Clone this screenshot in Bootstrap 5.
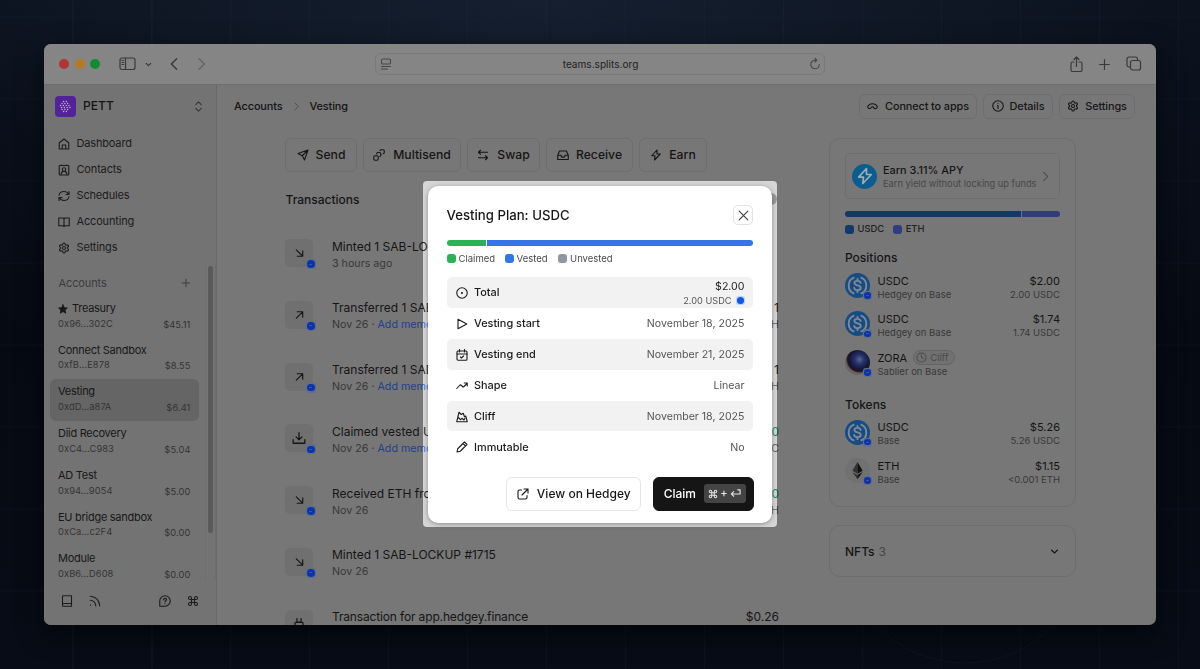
<!DOCTYPE html>
<html lang="en">
<head>
<meta charset="utf-8">
<meta name="viewport" content="width=device-width, initial-scale=1">
<title>Vesting – Splits Teams</title>
<link href="https://cdn.jsdelivr.net/npm/bootstrap@5.3.0/dist/css/bootstrap.min.css" rel="stylesheet">
<style>
:root{--ink:#151515;--soft:#383838;--line:#6e6e6e}
body{font-family:Inter,"Liberation Sans",sans-serif;font-size:12px;line-height:1.25;color:var(--ink);width:1200px;height:669px;overflow:hidden;position:relative;
 background:
 repeating-linear-gradient(90deg,transparent 0 72px,rgba(40,75,110,.1) 72px 73.5px,transparent 73.5px 79px),
 radial-gradient(ellipse 620px 240px at 45% 0,#151f2f,transparent),
 linear-gradient(#0c131f,#060a13 50%,#070c16)}
.gridlines{position:absolute;inset:0}
svg{display:block;flex:none;fill:none;stroke:currentColor;stroke-width:2.2;stroke-linecap:round;stroke-linejoin:round}
.w12{width:12px;height:12px}.w14{width:14px;height:14px}
.win{position:relative;margin:44px;width:1112px;height:581px;border-radius:7px;background:#777;overflow:hidden;box-shadow:0 8px 26px rgba(0,0,0,.55)}
.bar-top{height:41px;background:#858585;border-bottom:1px solid #6d6d6d;color:#393939;padding:0 14px 0 15px}
.light{width:10px;height:10px;border-radius:50%;margin-right:5.5px}
.addr{width:450px;height:22px;border:1px solid #797979;border-radius:6px;margin-left:166px;font-size:10.1px;color:#222;padding:0 3px 0 4px}
.side{width:173px;background:#737373;border-right:1px solid #696969;height:540px;font-size:11px}
.brand-sq{width:21px;height:21px;border-radius:4px;background:#522398;color:#c8a9dc}
.nav-row{height:26.2px;gap:6.5px;padding-left:14px;color:#1c1c1c;letter-spacing:-.015em}
.acct{height:41.75px;margin-left:6px;width:148.5px;border-radius:6px;padding:6.5px 8px 0 8px;color:#181818;font-size:11px;letter-spacing:-.025em}
.acct .sub{font-size:9.3px;color:#343434;letter-spacing:.01em;line-height:16px}
.acct .sub span{font-size:9.3px;line-height:17px}
.acct.on{background:#656565}
.track{width:11px;height:314px;border-left:1px solid #6d6d6d;border-right:1px solid #6d6d6d;padding:1px 2px}
.thumb{height:267px;border-radius:4px;background:#5a5a5a}
.crumb{font-size:10.9px;font-weight:500;letter-spacing:-.01em;padding-top:1px}
.hbtn{height:25px;border:1px solid var(--line);border-radius:6px;font-size:10.9px;letter-spacing:-.01em;font-weight:500;color:#161616}
.hbtn span{padding-top:1px}
.abtn{height:34px;border:1px solid var(--line);border-radius:6px;font-size:12.2px;font-weight:500}
.feed{width:494px;margin-left:68px}
.tx{height:61.8px}
.ico{position:relative;width:28px;height:28px;border-radius:5px;background:#707070;margin-top:8px;margin-right:19px}
.base{position:absolute;width:10px;height:10px;border-radius:3px;background:#606d8c;right:-3px;bottom:-2px}
.base::before{content:"";position:absolute;inset:1.2px;border-radius:50%;background:#0a34ac}
.base::after{content:"";position:absolute;left:2.5px;top:4.5px;width:3.5px;height:1px;background:#3f5591}
.tx .tt{font-size:12px;line-height:17px;margin-top:6.5px}
.tx .sub{font-size:10.7px;line-height:17px;color:var(--soft)}
.lnk{color:#1f4288}.grn{color:#0f5139}
.panel{width:247px;border:1px solid var(--line);border-radius:11px;padding:14px 15px}
.earn{height:46px;border:1px solid var(--line);border-radius:5px;padding:0 8px 0 6px}
.coin{position:relative;width:25px;height:25px;margin-bottom:2px}
.coin .base{right:-2px;bottom:-2px;width:9px;height:9px}
.coin .base::after{top:4px;width:3px}
.sq{width:9px;height:9px;border-radius:3px}
.hold{height:38.6px;font-size:11px}
.hold .words{padding-top:1.5px}
.hold .sub{font-size:9.5px;color:var(--soft);line-height:13px}
.hold .tt{line-height:14px}
.ph{font-size:12px;font-weight:500;height:18px;line-height:19px}
.pill{border:1px solid #646464;border-radius:8px;height:15px;font-size:9.6px;color:#4a4a4a;padding:0 5px 0 2px;gap:3px;background:#717171}
.spot{position:absolute;left:423px;top:181px;width:354px;height:346px;border-radius:4px;padding:5px;backdrop-filter:brightness(1.8)}
.dlg{width:344px;height:337px;border-radius:10px;background:#fff;box-shadow:0 1px 5px rgba(0,0,0,.35);padding:19px 19px 12px 18.5px;color:#171717}
.dlg h1{font-size:13.2px;font-weight:500;padding-top:1px}
.xbtn{width:20px;height:20px;border:1px solid #e2e2e2;border-radius:5px;color:#444}
.seg{height:6px}
.dlg .lg{font-size:9.5px;color:#4b4b4b;height:12px}
.drow{height:30.9px;border-radius:5px;padding:1px 8.5px 0 9px;font-size:10.6px;color:#555}
.drow:nth-child(odd){background:#f2f2f2}
.drow svg{color:#1b1b1b}
.drow b{font-weight:500;color:#1b1b1b;margin-left:6.5px;font-size:10.9px}
.dbtn{height:34px;border:1px solid #e6e6e6;border-radius:6px;font-size:12px;font-weight:500}
.dark{background:#151515;border-color:#151515;color:#fff}
.kbd-tag{background:#444;border-radius:3px;width:42px;height:19px;gap:2px;color:#e4e4e4;font-size:11px}
</style>
</head>
<body>
<svg class="gridlines" width="1200" height="669" style="stroke:#12202f;stroke-width:1">
 <path d="M0 17H1200M0 99H1200M0 181H1200M0 263H1200M0 345H1200M0 427H1200M0 509H1200M0 591H1200" opacity=".45"/><circle cx="965" cy="539" r="124" opacity=".4"/>
</svg>
<svg width="0" height="0" class="position-absolute">
<symbol id="gear" viewBox="0 0 24 24"><path d="M12.220 2h-.440a2 2 0 0 0-2 2v.180a2 2 0 0 1-1 1.730l-.430.250a2 2 0 0 1-2 0l-.150-.080a2 2 0 0 0-2.730.730l-.220.380a2 2 0 0 0 .730 2.730l.150.100a2 2 0 0 1 1 1.720v.510a2 2 0 0 1-1 1.740l-.150.090a2 2 0 0 0-.730 2.730l.220.380a2 2 0 0 0 2.730.730l.150-.080a2 2 0 0 1 2 0l.430.250a2 2 0 0 1 1 1.730V20a2 2 0 0 0 2 2h.440a2 2 0 0 0 2-2v-.180a2 2 0 0 1 1-1.730l.430-.250a2 2 0 0 1 2 0l.150.080a2 2 0 0 0 2.730-.730l.220-.390a2 2 0 0 0-.730-2.730l-.150-.080a2 2 0 0 1-1-1.740v-.500a2 2 0 0 1 1-1.740l.150-.090a2 2 0 0 0 .730-2.730l-.220-.380a2 2 0 0 0-2.730-.730l-.150.080a2 2 0 0 1-2 0l-.430-.250a2 2 0 0 1-1-1.730V4a2 2 0 0 0-2-2z"/><circle cx="12" cy="12" r="3"/></symbol>
<symbol id="dr" viewBox="0 0 24 24"><path d="M5 5l14 14M19 7v12H7"/></symbol>
<symbol id="ur" viewBox="0 0 24 24"><path d="M5 19L19 5M7 5h12v12"/></symbol>
<symbol id="dl" viewBox="0 0 24 24"><path d="M12 3v12M7 10l5 5 5-5M2 15v6h20v-6"/></symbol>
<symbol id="bolt" viewBox="0 0 24 24"><path d="M14 2L3.500 13.500h6.500L9 22l11.500-12H14z"/></symbol>
<symbol id="cmd" viewBox="0 0 24 24"><path d="M9 9h6v6H9zM9 9V6a3 3 0 1 0-3 3zM15 9h3a3 3 0 1 0-3-3zM15 15v3a3 3 0 1 0 3-3zM9 15H6a3 3 0 1 0 3 3z"/></symbol>
<symbol id="cr" viewBox="0 0 24 24"><path d="M8 3l9 9-9 9"/></symbol>
<symbol id="cd" viewBox="0 0 24 24"><path d="M4 8l8 8 8-8"/></symbol>
<symbol id="plus" viewBox="0 0 24 24"><path d="M12 3v18M3 12h18"/></symbol>
<symbol id="usdc" viewBox="0 0 32 32"><circle cx="16" cy="16" r="16" fill="#174b83" stroke="none"/><path d="M12 5.500a11.200 11.200 0 0 0 0 21M20 5.500a11.200 11.200 0 0 1 0 21" stroke="#7f8a96" stroke-width="2.400" stroke-linecap="butt"/><path d="M20 12.700c-.5-2-2-2.700-4-2.700-2.300 0-4 1-4 2.900 0 4.300 8.200 1.700 8.200 6.100 0 2-1.900 3-4.200 3-2.200 0-3.900-1-4.300-3M16 7.500V10M16 22v2.500" stroke="#7f8a96" stroke-width="2.400"/></symbol>
</svg>

<div class="win">
 <header class="bar-top d-flex align-items-center">
  <i class="light" style="background:#b23432"></i><i class="light" style="background:#b67b22"></i><i class="light" style="background:#138b33"></i>
  <svg style="margin-left:13px;stroke-width:1.200" width="17" height="14" viewBox="0 0 17 14"><rect x="1" y="1" width="15" height="11.500" rx="2"/><path d="M6.500 1v11.500M3 3.500h1.500M3 5.500h1.500M3 7.500h1.500" /></svg>
  <svg style="margin-left:9.500px;stroke-width:4" width="7" height="7"><use href="#cd"/></svg>
  <svg style="margin-left:14px" width="16" height="16" viewBox="0 0 24 24"><path d="M16 4l-8 8 8 8"/></svg>
  <svg style="margin-left:11px;color:#646464" width="16" height="16" viewBox="0 0 24 24"><path d="M9 4l8 8-8 8"/></svg>
  <div class="addr d-flex align-items-center justify-content-between">
   <svg width="12" height="12" viewBox="0 0 12 12" style="stroke-width:1.100;color:#484848"><rect x="1.500" y="1" width="9" height="5" rx="1.200"/><path d="M1.500 8.500h9M1.500 11h6"/></svg>
   <span>teams.splits.org</span>
   <svg width="12" height="12" viewBox="0 0 24 24" style="color:#484848"><path d="M20.500 13A8.500 8.500 0 1 1 12 4.500h3M12 1l3.500 3.500L12 8"/></svg>
  </div>
  <svg class="ms-auto" width="15" height="17" viewBox="0 0 15 17" style="stroke-width:1.200"><path d="M5 6H3.500A1.500 1.500 0 0 0 2 7.500V14a1.500 1.500 0 0 0 1.500 1.500h8A1.500 1.500 0 0 0 13 14V7.500A1.500 1.500 0 0 0 11.500 6H10M7.500 10.500V1M5 3.500L7.500 1 10 3.500"/></svg>
  <svg style="margin-left:14px" width="13" height="13"><use href="#plus"/></svg>
  <svg style="margin-left:15px;stroke-width:1.200" width="16" height="16" viewBox="0 0 16 16"><rect x="4.500" y="4.500" width="10" height="9.500" rx="2"/><path d="M4.500 11H3a2 2 0 0 1-2-2V3a2 2 0 0 1 2-2h6.500a2 2 0 0 1 2 2v1.500"/></svg>
 </header>

 <div class="d-flex">
  <aside class="side d-flex flex-column">
   <div class="d-flex align-items-center" style="height:42px;padding:0 12px 0 11px">
    <div class="brand-sq d-flex align-items-center justify-content-center"><svg width="15" height="15" viewBox="0 0 15 15" style="stroke-width:1.400;stroke-dasharray:.1 2.700"><path d="M5.500 2.500h5M4 4.500h8M2.500 6.500h11M3.500 8.500h9M4 10.500h8M5.500 12.500h5"/></svg></div>
    <span style="font-size:12.100px;margin-left:7px;font-weight:500">PETT</span>
    <svg class="ms-auto" width="11" height="11" viewBox="0 0 24 24" style="color:#333"><path d="M6 8l6-6 6 6M6 16l6 6 6-6"/></svg>
   </div>
   <nav style="padding-top:3.500px">
    <div class="nav-row d-flex align-items-center"><svg class="w12" viewBox="0 0 24 24"><path d="M2.500 9.500L12 2l9.500 7.500V22h-19zM8.500 22v-8h7v8"/></svg>Dashboard</div>
    <div class="nav-row d-flex align-items-center"><svg class="w12" viewBox="0 0 24 24"><rect x="2.500" y="3" width="19" height="19" rx="1"/><circle cx="12" cy="11" r="3.500"/><path d="M6.500 21v-3l3-3h5l3 3v3M7 3V1.500M17 3V1.500"/></svg>Contacts</div>
    <div class="nav-row d-flex align-items-center"><svg class="w12" viewBox="0 0 24 24"><path d="M2 10.500C3 6 7 3 12 3c4 0 7.500 2.500 9 5.500M22 3v6h-6M22 13.500C21 18 17 21 12 21c-4 0-7.500-2.500-9-5.500M2 21v-6h6"/></svg>Schedules</div>
    <div class="nav-row d-flex align-items-center"><svg class="w12" viewBox="0 0 24 24"><path d="M12 5.500L10 4H1.500v15.500H10l2 1.500 2-1.500h8.500V4H14zM12 5.500V21"/></svg>Accounting</div>
    <div class="nav-row d-flex align-items-center"><svg class="w12"><use href="#gear"/></svg>Settings</div>
   </nav>
   <div class="d-flex" style="height:318px">
    <div class="overflow-hidden" style="width:161px;height:318px">
     <div class="d-flex align-items-center justify-content-between" style="height:34px;padding:10px 14px 0 14.500px;color:#3c3c3c;letter-spacing:-.01em">Accounts<svg width="10" height="10" style="stroke-width:2.400"><use href="#plus"/></svg></div>
     <div>
     <div class="acct"><div class="d-flex align-items-center"><svg width="10" height="10" viewBox="0 0 24 24" style="fill:currentColor;margin-right:4px"><path d="M12 2l3 7 7.500.6-5.700 5 1.700 7.400L12 18l-6.500 4 1.700-7.400-5.700-5L9 9z"/></svg>Treasury</div><div class="sub d-flex justify-content-between">0x96…302C<span>$45.11</span></div></div>
     <div class="acct">Connect Sandbox<div class="sub d-flex justify-content-between">0xfB…E878<span>$8.55</span></div></div>
     <div class="acct on">Vesting<div class="sub d-flex justify-content-between">0xdD…a87A<span>$6.41</span></div></div>
     <div class="acct">Diid Recovery<div class="sub d-flex justify-content-between">0xC4…C983<span>$5.04</span></div></div>
     <div class="acct">AD Test<div class="sub d-flex justify-content-between">0x94…9054<span>$5.00</span></div></div>
     <div class="acct">EU bridge sandbox<div class="sub d-flex justify-content-between">0xCa…c2F4<span>$0.00</span></div></div>
     <div class="acct">Module<div class="sub d-flex justify-content-between">0xB6…D608<span>$0.00</span></div></div>
     </div>
    </div>
    <div class="track" style="margin-top:4px"><div class="thumb"></div></div>
   </div>
   <div class="d-flex align-items-center" style="height:44px;padding:0 17px;color:#1c1c1c">
    <svg class="w12" viewBox="0 0 24 24"><path d="M3 20V3a1.500 1.500 0 0 1 1.500-1.500H21v21H5A2 2 0 0 1 3 20.500c0-2 1-3.500 2.500-3.500H21"/></svg>
    <svg class="w12" viewBox="0 0 24 24" style="margin-left:16px"><path d="M2.500 2.500a19 19 0 0 1 19 19M2.500 10.500a11 11 0 0 1 11 11M3 19.500v1"/></svg>
    <svg class="w12 ms-auto" viewBox="0 0 24 24"><path d="M1.500 22.500V12A10.500 10.500 0 1 1 12 22.500zM9 9.500c.3-4 6.500-3.500 6 0-.3 2-3 2-3 4.500M12 17.300v.2"/></svg>
    <svg class="w12" style="margin-left:16px"><use href="#cmd"/></svg>
   </div>
  </aside>

  <main class="flex-grow-1" style="height:540px">
   <div class="d-flex align-items-center" style="height:42px;padding:0 21px 0 17px">
    <span class="crumb">Accounts</span><svg width="9" height="9" style="margin:0 9px;color:#484848;stroke-width:2.400"><use href="#cr"/></svg><span class="crumb">Vesting</span>
    <div class="ms-auto d-flex" style="gap:6px">
     <div class="hbtn d-flex align-items-center justify-content-center" style="width:118px;gap:7px"><svg width="11" height="11" viewBox="0 0 24 24" style="stroke-width:2.500"><path d="M1.500 12C6 4 18 4 22.500 12M2 14c1 4 6 4 7.500 0 .8-2 4.200-2 5 0 1.500 4 6.500 4 7.500 0"/></svg><span>Connect to apps</span></div>
     <div class="hbtn d-flex align-items-center justify-content-center" style="width:70px;gap:6px"><svg class="w12" viewBox="0 0 24 24"><circle cx="12" cy="12" r="10.500"/><path d="M11 11h1v6M12 7v.2"/></svg><span>Details</span></div>
     <div class="hbtn d-flex align-items-center justify-content-center" style="width:76px;gap:6px"><svg class="w12"><use href="#gear"/></svg><span>Settings</span></div>
    </div>
   </div>
   <div class="d-flex">
    <section class="feed" style="padding-top:11px">
     <div class="d-flex" style="gap:6px">
      <div class="abtn d-flex align-items-center justify-content-center" style="width:72px;gap:7px"><svg class="w12" viewBox="0 0 24 24"><path d="M22 2L15 22l-4.500-8.500L2 9zM22 2L10.500 13.500"/></svg>Send</div>
      <div class="abtn d-flex align-items-center justify-content-center" style="width:98px;gap:8px"><svg class="w12" viewBox="0 0 24 24"><rect x="1.500" y="13.500" width="9" height="9" rx="3"/><path d="M7.500 10v-.5a2.500 2.500 0 0 1 2.500-2.500h3a2.500 2.500 0 0 1 2.500 2.500v3a2.500 2.500 0 0 1-2 2.500M14 3.500a2.500 2.500 0 0 1 2-2h4a2.500 2.500 0 0 1 2.500 2.500v3a2.500 2.500 0 0 1-2.500 2.500"/></svg>Multisend</div>
      <div class="abtn d-flex align-items-center justify-content-center" style="width:73px;gap:8px"><svg class="w12" viewBox="0 0 24 24"><path d="M21 6.500H3M7 2.500l-4 4 4 4M3 17.500h18M17 13.500l4 4-4 4"/></svg>Swap</div>
      <div class="abtn d-flex align-items-center justify-content-center" style="width:87px;gap:7px"><svg class="w12" viewBox="0 0 24 24"><path d="M1.500 12.500L5 4h14l3.500 8.500V21h-21zM1.500 12.500H8a4 4 0 0 0 8 0h6.500"/></svg>Receive</div>
      <div class="abtn d-flex align-items-center justify-content-center" style="width:68px;gap:7px"><svg class="w12"><use href="#bolt"/></svg>Earn</div>
     </div>
     <div class="d-flex align-items-center justify-content-between" style="height:28px;margin-top:13px;padding-left:.5px;font-weight:500">Transactions<i class="rounded-circle" style="width:12px;height:12px;background:#555;margin-right:2px"></i></div>
     <div style="height:412px;overflow:hidden;padding-top:18px">
      <div class="tx d-flex"><div class="ico d-flex align-items-center justify-content-center"><svg class="w12" style="width:11px;stroke-width:2.500"><use href="#dr"/></svg><i class="base"></i></div><div><div class="tt">Minted 1 SAB-LOCKUP</div><div class="sub">3 hours ago</div></div></div>
      <div class="tx d-flex"><div class="ico d-flex align-items-center justify-content-center"><svg class="w12" style="width:11px;stroke-width:2.500"><use href="#ur"/></svg><i class="base"></i></div><div><div class="tt">Transferred 1 SAB-LOCKUP</div><div class="sub">Nov 26 · <span class="lnk">Add memo</span></div></div><div class="ms-auto text-end"><div class="tt">1</div><div class="sub">ETH</div></div></div>
      <div class="tx d-flex"><div class="ico d-flex align-items-center justify-content-center"><svg class="w12" style="width:11px;stroke-width:2.500"><use href="#ur"/></svg><i class="base"></i></div><div><div class="tt">Transferred 1 SAB-LOCKUP</div><div class="sub">Nov 26 · <span class="lnk">Add memo</span></div></div><div class="ms-auto text-end"><div class="tt">1</div><div class="sub">ETH</div></div></div>
      <div class="tx d-flex"><div class="ico d-flex align-items-center justify-content-center"><svg class="w14"><use href="#dl"/></svg><i class="base"></i></div><div><div class="tt">Claimed vested USDC</div><div class="sub">Nov 26 · <span class="lnk">Add memo</span></div></div><div class="ms-auto text-end"><div class="tt grn">0</div><div class="sub">USDC</div></div></div>
      <div class="tx d-flex"><div class="ico d-flex align-items-center justify-content-center"><svg class="w12" style="width:11px;stroke-width:2.500"><use href="#dr"/></svg><i class="base"></i></div><div><div class="tt">Received ETH from</div><div class="sub">Nov 26</div></div><div class="ms-auto text-end"><div class="tt grn">0</div><div class="sub">ETH</div></div></div>
      <div class="tx d-flex"><div class="ico d-flex align-items-center justify-content-center"><svg class="w12" style="width:11px;stroke-width:2.500"><use href="#dr"/></svg><i class="base"></i></div><div><div class="tt">Minted 1 SAB-LOCKUP #1715</div><div class="sub">Nov 26</div></div></div>
      <div class="tx d-flex"><div class="ico d-flex align-items-center justify-content-center"><svg class="w14" viewBox="0 0 24 24"><path d="M8.500 3v6M15.500 3v6M5 14v-2.500A2.500 2.500 0 0 1 7.500 9h9a2.500 2.500 0 0 1 2.500 2.500V14c0 8-14 8-14 0zM12 20v3"/></svg></div><div><div class="tt" style="letter-spacing:-.15px">Transaction for app.hedgey.finance</div></div><div class="ms-auto text-end"><div class="tt">$0.26</div></div></div>
     </div>
    </section>

    <section style="margin-left:50px;padding-top:11px">
     <div class="panel" style="height:369px">
      <div class="earn d-flex align-items-center">
       <div class="coin mb-0 rounded-circle d-flex align-items-center justify-content-center" style="background:#0a5d8f;color:#a0adb4"><svg width="18" height="18"><use href="#bolt"/></svg></div>
       <div class="text-nowrap" style="margin-left:6px"><div style="font-size:10.900px;line-height:14px;font-weight:500">Earn 3.11% APY</div><div style="font-size:9.250px;line-height:13px;color:#474747">Earn yield without locking up funds</div></div>
       <svg class="ms-auto" width="11" height="11" style="color:#484848"><use href="#cr"/></svg>
      </div>
      <div class="d-flex" style="margin-top:12px;gap:1px"><div class="seg rounded-start-pill" style="width:175.500px;background:#12396a"></div><div class="seg rounded-end-pill flex-grow-1" style="background:#303b80"></div></div>
      <div class="d-flex align-items-center" style="height:14px;margin-top:5px;font-size:9.400px;font-weight:500;color:#222"><i class="sq" style="background:#12396a;margin-right:3.500px"></i>USDC<i class="sq" style="background:#303b80;margin:0 3.500px 0 9px"></i>ETH</div>
      <div class="ph" style="margin-top:12px;margin-bottom:1px">Positions</div>
      <div class="hold d-flex align-items-center"><div class="coin"><svg width="25" height="25"><use href="#usdc"/></svg><i class="base"></i></div><div class="words" style="margin-left:7.500px"><div class="tt">USDC</div><div class="sub">Hedgey on Base</div></div><div class="words ms-auto text-end"><div class="tt">$2.00</div><div class="sub">2.00 USDC</div></div></div>
      <div class="hold d-flex align-items-center"><div class="coin"><svg width="25" height="25"><use href="#usdc"/></svg><i class="base"></i></div><div class="words" style="margin-left:7.500px"><div class="tt">USDC</div><div class="sub">Hedgey on Base</div></div><div class="words ms-auto text-end"><div class="tt">$1.74</div><div class="sub">1.74 USDC</div></div></div>
      <div class="hold d-flex align-items-center"><div class="coin rounded-circle" style="background:radial-gradient(circle at 58% 38%,#5d6590 0,#283269 22%,#14173d 46%,#1f1418 56%,#686364 64%,#6c6c6c)"><i class="base"></i></div><div class="words" style="margin-left:7.500px"><div class="tt d-flex align-items-center">ZORA<span class="pill d-flex align-items-center" style="margin-left:6px"><svg width="11" height="11" viewBox="0 0 24 24"><circle cx="12" cy="12" r="10"/><path d="M12 6v6l4 2"/></svg>Cliff</span></div><div class="sub">Sablier on Base</div></div></div>
      <div class="ph" style="margin-top:12px;margin-bottom:1px">Tokens</div>
      <div class="hold d-flex align-items-center"><div class="coin"><svg width="25" height="25"><use href="#usdc"/></svg><i class="base"></i></div><div class="words" style="margin-left:7.500px"><div class="tt">USDC</div><div class="sub">Base</div></div><div class="words ms-auto text-end"><div class="tt">$5.26</div><div class="sub">5.26 USDC</div></div></div>
      <div class="hold d-flex align-items-center"><div class="coin rounded-circle" style="background:#717171"><svg width="25" height="25" viewBox="0 0 25 25" style="stroke:none"><path d="M12.500 4L7.300 12.800l5.200 3z" fill="#333"/><path d="M12.500 4l5.200 8.800-5.200 3z" fill="#111"/><path d="M7.300 14l5.200 7.300V17z" fill="#333"/><path d="M17.700 14l-5.200 7.300V17z" fill="#111"/></svg><i class="base"></i></div><div class="words" style="margin-left:7.500px"><div class="tt">ETH</div><div class="sub">Base</div></div><div class="words ms-auto text-end"><div class="tt">$1.15</div><div class="sub">&lt;0.001 ETH</div></div></div>
     </div>
     <div class="panel d-flex align-items-center" style="height:52px;margin-top:18px;padding-right:16px;font-weight:500">NFTs<span style="color:#444;font-weight:400;margin-left:4px">3</span><svg class="ms-auto" width="9" height="9" style="stroke-width:3"><use href="#cd"/></svg></div>
    </section>
   </div>
  </main>
 </div>
</div>

<div class="spot">
 <div class="dlg" role="dialog">
  <div class="d-flex align-items-center justify-content-between" style="height:20px"><h1 class="m-0">Vesting Plan: USDC</h1><div class="xbtn d-flex align-items-center justify-content-center"><svg width="13" height="13" viewBox="0 0 24 24"><path d="M4 4l16 16M20 4L4 20"/></svg></div></div>
  <div class="d-flex" style="margin-top:15px;gap:1px"><div class="seg rounded-start-pill" style="width:13%;background:#28b354"></div><div class="seg rounded-end flex-grow-1" style="background:#3276ea"></div></div>
  <div class="lg d-flex align-items-center" style="margin-top:6.500px"><i class="sq" style="background:#28b354;margin-right:3px"></i>Claimed<i class="sq" style="background:#3276ea;margin:0 3px 0 9.500px"></i>Vested<i class="sq" style="background:#9097a3;margin:0 3px 0 10.500px"></i>Unvested</div>
  <div style="margin-top:12.500px">
   <div class="drow d-flex align-items-center"><svg class="w12" viewBox="0 0 24 24"><circle cx="12" cy="12" r="10.500"/><circle cx="12" cy="12" r="1"/></svg><b>Total</b><div class="ms-auto text-end" style="padding-top:2px"><div style="line-height:14px;color:#222">$2.00</div><div class="d-flex align-items-center" style="font-size:9.200px;line-height:13px">2.00 USDC<i class="position-relative" style="width:9px;height:9px;border-radius:3px;background:#bcd3fa;margin-left:4px"><i class="position-absolute rounded-circle" style="inset:1px;background:#0b55f0"></i></i></div></div></div>
   <div class="drow d-flex align-items-center"><svg class="w12" viewBox="0 0 24 24"><path d="M4 2.500L21.500 12 4 21.500z"/></svg><b>Vesting start</b><span class="ms-auto">November 18, 2025</span></div>
   <div class="drow d-flex align-items-center"><svg class="w12" viewBox="0 0 24 24"><rect x="2" y="4" width="20" height="18.500" rx="2"/><path d="M2 10h20M7 1v5M17 1v5M9 16l2 2 4-4"/></svg><b>Vesting end</b><span class="ms-auto">November 21, 2025</span></div>
   <div class="drow d-flex align-items-center"><svg class="w12" viewBox="0 0 24 24"><path d="M1.500 17l6-6.500c1.500-1.500 2.500-.5 3.500.5l2 2c1 1 2 1 3 0L22 7M16.500 6H22.500v6"/></svg><b>Shape</b><span class="ms-auto">Linear</span></div>
   <div class="drow d-flex align-items-center"><svg class="w12" viewBox="0 0 24 24"><path d="M1.500 21.500L6 2.500l4.500 4.500 4-2.500 2.500 7 2.500-1.500 3 11.500zM4.500 13l5 4.500 2.500-3 4 3.500 2-3.500"/></svg><b>Cliff</b><span class="ms-auto">November 18, 2025</span></div>
   <div class="drow d-flex align-items-center"><svg class="w12" viewBox="0 0 24 24"><path d="M2 22l1.500-6.500L17 2l5 5L8.500 20.500zM14 5l5 5"/></svg><b>Immutable</b><span class="ms-auto">No</span></div>
  </div>
  <div class="d-flex justify-content-end" style="margin-top:14.500px;gap:12px;margin-right:-.5px">
   <div class="dbtn d-flex align-items-center justify-content-center" style="width:135px;gap:8px;padding-left:1.500px"><svg class="w12" viewBox="0 0 24 24"><path d="M9 4H5a3 3 0 0 0-3 3v12a3 3 0 0 0 3 3h12a3 3 0 0 0 3-3v-4M14 2h8v8M22 2L10 14"/></svg>View on Hedgey</div>
   <div class="dbtn dark d-flex align-items-center justify-content-end" style="width:101px;gap:7.500px;padding-right:7px">Claim<span class="kbd-tag d-flex align-items-center justify-content-center"><svg width="10" height="10" style="stroke-width:2.500"><use href="#cmd"/></svg><span>+</span><svg width="11" height="11" viewBox="0 0 24 24" style="stroke-width:2.500"><path d="M17 4h5v9H3M8 8l-5 5 5 5"/></svg></span></div>
  </div>
 </div>
</div>
<script src="https://cdn.jsdelivr.net/npm/bootstrap@5.3.0/dist/js/bootstrap.bundle.min.js"></script>
</body>
</html>
